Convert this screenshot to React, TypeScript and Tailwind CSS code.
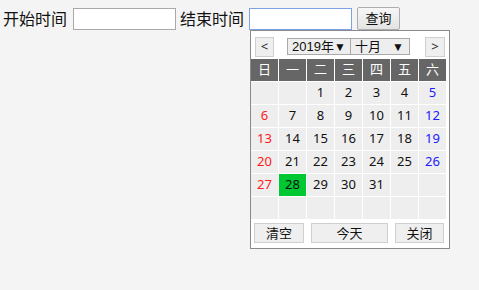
const font = { fontFamily: '"Noto Sans", "Noto Sans CJK SC", sans-serif' };
const selectFont = { fontFamily: '"Liberation Sans", "Noto Sans CJK SC", sans-serif' };

const weekdays = ["日", "一", "二", "三", "四", "五", "六"];

const days: (number | null)[] = [
  null, null, 1, 2, 3, 4, 5,
  6, 7, 8, 9, 10, 11, 12,
  13, 14, 15, 16, 17, 18, 19,
  20, 21, 22, 23, 24, 25, 26,
  27, 28, 29, 30, 31, null, null,
  null, null, null, null, null, null, null,
];

const DatePicker = () => (
  <div className="absolute left-[250px] top-[30px] flex h-[219px] w-[200px] flex-col border border-[#8a8a8a] bg-white">
    {/* header: prev / selects / next */}
    <div className="flex h-[27px] items-center px-[4px] pt-[4px]">
      <button className="flex h-[20px] w-[19px] items-center justify-center border border-[#cfcfcf] bg-[#efefef] text-[13px] leading-none text-[#222]">
        &lt;
      </button>
      <div
        className="ml-[13px] flex h-[17px] w-[64px] items-center justify-between whitespace-nowrap border border-[#aaa] bg-[#eee] pl-[4px] pr-[5px] text-[13px] leading-none text-[#111]"
        style={selectFont}
      >
        <span>2019年</span>
        <span className="shrink-0 text-[12px]">▼</span>
      </div>
      <div
        className="flex h-[17px] w-[59px] items-center justify-between whitespace-nowrap border border-l-0 border-[#aaa] bg-[#eee] pl-[4px] pr-[5px] text-[13px] leading-none text-[#111]"
        style={selectFont}
      >
        <span>十月</span>
        <span className="shrink-0 text-[12px]">▼</span>
      </div>
      <button className="ml-auto flex h-[20px] w-[20px] items-center justify-center border border-[#cfcfcf] bg-[#efefef] text-[13px] leading-none text-[#222]">
        &gt;
      </button>
    </div>
    {/* day grid */}
    <div className="mt-[1px] grid grid-cols-[repeat(7,27px)] gap-[1px]">
      {weekdays.map((w) => (
        <div
          key={w}
          className="flex h-[22px] items-center justify-center bg-[#666] text-[13px] text-white"
        >
          {w}
        </div>
      ))}
      {days.map((d, i) => {
        const col = i % 7;
        const color =
          d === null
            ? ""
            : col === 0
              ? "text-[#ff1a1a]"
              : col === 6
                ? "text-[#1a1aff]"
                : "text-[#111]";
        return (
          <div
            key={i}
            className={`flex h-[22px] items-center justify-center text-[13px] ${d === 28 ? "bg-[#00c832]" : "bg-[#eee]"} ${color}`}
          >
            {d}
          </div>
        );
      })}
    </div>
    {/* footer buttons */}
    <div className="mt-[4px] flex items-center gap-[7px] px-[3px]">
      <button className="h-[20px] w-[50px] border border-[#cfcfcf] bg-[#efefef] text-[13px] leading-none text-[#111]">
        清空
      </button>
      <button className="h-[20px] w-[77px] border border-[#cfcfcf] bg-[#efefef] text-[13px] leading-none text-[#111]">
        今天
      </button>
      <button className="h-[20px] w-[49px] border border-[#cfcfcf] bg-[#efefef] text-[13px] leading-none text-[#111]">
        关闭
      </button>
    </div>
  </div>
);

export default function App() {
  return (
    <div className="relative h-[290px] w-[479px] bg-[#f4f4f4]" style={font}>
      <div className="flex items-center pl-[3px] pt-[7px] text-[16px] leading-none text-[#111]">
        <span>开始时间</span>
        <input className="ml-[6px] h-[22px] w-[103px] border border-[#a9a9a9] bg-white outline-none" />
        <span className="ml-[4px]">结束时间</span>
        <input className="ml-[5px] h-[22px] w-[103px] border border-[#7da2e6] bg-white outline-none" />
        <button className="ml-[5px] h-[23px] w-[43px] rounded-[2px] border border-[#adadad] bg-gradient-to-b from-[#f7f7f7] to-[#e3e3e3] text-[13px] leading-none text-[#111]">
          查询
        </button>
      </div>
      <DatePicker />
    </div>
  );
}
